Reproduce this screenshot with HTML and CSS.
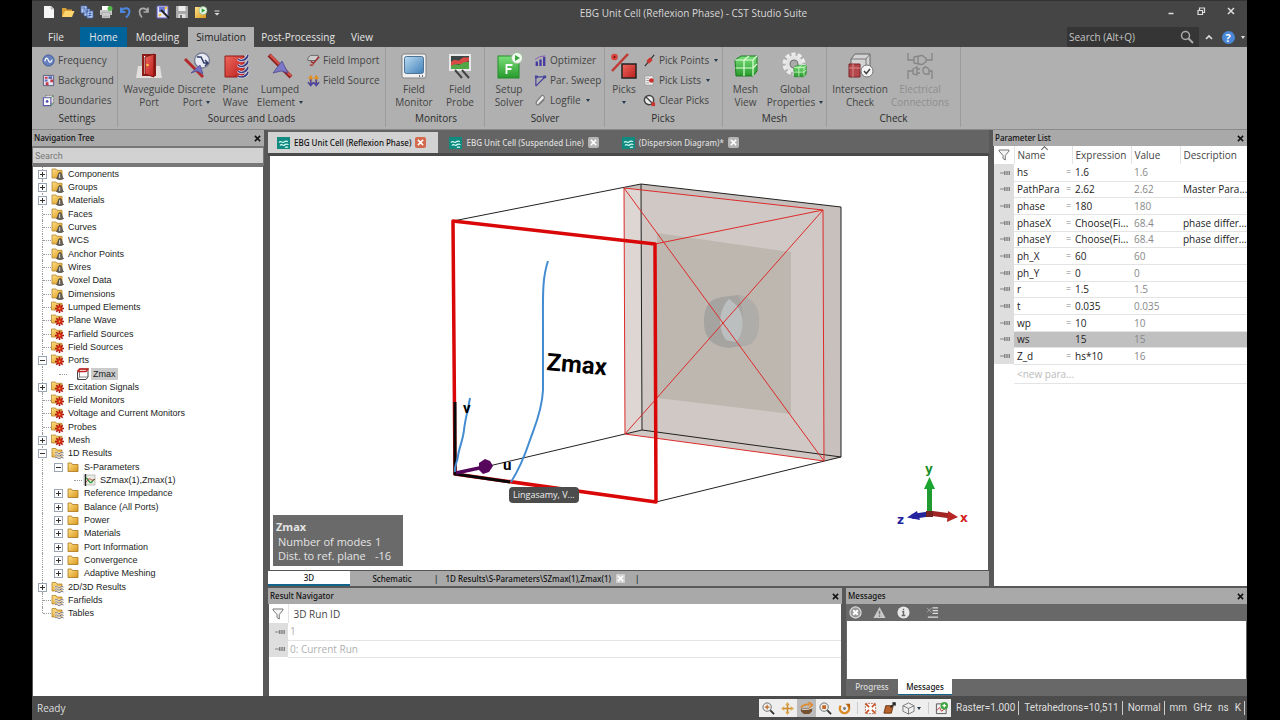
FILE: index.html
```html
<!DOCTYPE html>
<html lang="en">
<head>
<meta charset="utf-8">
<title>EBG Unit Cell (Reflexion Phase) - CST Studio Suite</title>
<link rel="stylesheet" href="styles.css">
</head>
<body>
<svg class="defs" aria-hidden="true">
  <defs>
    <linearGradient id="gold" x1="0" y1="0" x2="1" y2="1"><stop offset="0" stop-color="#ffe28a"/><stop offset="1" stop-color="#d9961a"/></linearGradient>
    <linearGradient id="red" x1="0" y1="0" x2="1" y2="1"><stop offset="0" stop-color="#f0685c"/><stop offset="1" stop-color="#b81d1d"/></linearGradient>
    <linearGradient id="green" x1="0" y1="0" x2="0" y2="1"><stop offset="0" stop-color="#7be07a"/><stop offset="1" stop-color="#279a2d"/></linearGradient>
    <linearGradient id="blue" x1="0" y1="0" x2="1" y2="1"><stop offset="0" stop-color="#bcdcf2"/><stop offset="1" stop-color="#3f7fb8"/></linearGradient>
    <symbol id="folder" viewBox="0 0 13 12"><path d="M1 10.500V2h3.500l1 1.500H11v7z" fill="url(#gold)" stroke="#a8761a" stroke-width=".8"/></symbol>
    <symbol id="f-model" viewBox="0 0 13 12"><path d="M1 10V1h4l1 1.300h5V10z" fill="url(#gold)" stroke="#b58428" stroke-width=".8"/><path d="M5.500 10.500C7 10 7 4.500 9 4.500s2 5.500 3.500 6c-1.500 1.300-5.500 1.300-7 0z" fill="#6d6a63" stroke="#39362f" stroke-width=".7"/><path d="M8.600 6v4" stroke="#d8d4ca"/></symbol>
    <symbol id="f-gear" viewBox="0 0 13 12"><path d="M.5 9V1h4l1 1.300H11V9z" fill="url(#gold)" stroke="#b58428" stroke-width=".8"/><path d="M8.500 3v9M4 7.500h9M5.300 4.300l6.400 6.400M11.700 4.300l-6.400 6.400" stroke="#a81410" stroke-width="1.600"/><circle cx="8.500" cy="7.500" r="2.800" fill="#cf2a18"/><circle cx="8.500" cy="7.500" r="1" fill="#f2a03c"/></symbol>
    <symbol id="f-wave" viewBox="0 0 13 12"><path d="M1 10V1.500h4L6 3h5v7z" fill="url(#gold)" stroke="#b58428" stroke-width=".8"/><path d="M4 6c2-2 3 1.500 5 .3s2-1 3.500-.3M4 8.500c2-2 3 1.500 5 .3s2-1 3.500-.3M4 11c2-2 3 1.500 5 .3s2-1 3.500-.3" fill="none" stroke="#fff" stroke-width="1.800"/><path d="M4 6c2-2 3 1.500 5 .3s2-1 3.500-.3M4 8.500c2-2 3 1.500 5 .3s2-1 3.500-.3M4 11c2-2 3 1.500 5 .3s2-1 3.500-.3" fill="none" stroke="#5a5560" stroke-width=".9"/></symbol>
    <symbol id="f-port" viewBox="0 0 13 12"><path d="M1.500 3.500 3.500 1h8.500v8l-2 2.500H1.500z" fill="#fff" stroke="#444"/><path d="M3.500 1v8M1.500 11.500l2-2.500H12" stroke="#666" fill="none" stroke-width=".8"/><path d="M1.500 3.500h8.500M10 3.500 12 1H3.500L1.500 3.500" stroke="#c52222" fill="none" stroke-width="1.300"/></symbol>
    <symbol id="f-plot" viewBox="0 0 13 12"><rect x="1" y="1" width="11" height="10" fill="#e8ece2" stroke="#999" stroke-width=".6"/><path d="M2.500 0v12" stroke="#222" stroke-width="1.300"/><path d="M3 4c2 0 3 5 5 4.500s2-4 4-3" fill="none" stroke="#2c9a3a" stroke-width="1.300"/><path d="M3 8c2-1 2-4 4-3s3 2 5 0" fill="none" stroke="#c13c3c"/></symbol>
    <symbol id="funnel" viewBox="0 0 12 12"><path d="M1 1h10v1L7.300 6.500V11l-2.300-1.500v-3L1 2z" fill="#f4f4f4" stroke="#777"/></symbol>
    <symbol id="pin" viewBox="0 0 10 6"><path d="M0 3h4M4.500 1v4M5 2h5M5 4h5M7 1v4M9.500 1v4" stroke="#858585" stroke-width="1" fill="none"/></symbol>
    <symbol id="doc" viewBox="0 0 13 12"><path d="M0 0h13v12H0z" fill="#118a80"/><path d="M2 5.500c2-2.500 3 1 5-.5s2-1 4-.5M3 8.500c2-2.500 3 1 4.500-.5s2-1 4-.5M8 10.500c1-1 2 0 3-.5" fill="none" stroke="#d8fff8" stroke-width="1.200"/></symbol>
    <symbol id="x" viewBox="0 0 8 8"><path d="M1 1l6 6M7 1 1 7" stroke="currentColor" stroke-width="1.700"/></symbol>
    <symbol id="meshcube" viewBox="0 0 28 28"><path d="M3 8 9 4h16v15l-4 5H4z" fill="url(#green)" stroke="#187a20"/><path d="M3 8h18l4-4M21 8v16M12 8v16M3.500 16H21l4-4M12 8l5-4" stroke="#e0ffd8" fill="none" stroke-width="1.200"/></symbol>
  </defs>
</svg>
<div class="app">
<header class="titlebar">
  <div class="quick">
    <button aria-label="New"><svg viewBox="0 0 14 14"><path d="M2 1h7l3 3v9H2z" fill="#f6f6f6"/><path d="M9 1v3h3" fill="#ccc" stroke="#aaa" stroke-width=".6"/></svg></button>
    <button aria-label="Open"><svg viewBox="0 0 14 14"><path d="M1 12V3h4l1 1.500h5V7" fill="#d9a037"/><path d="M1 12 4 6h9.500L11 12z" fill="#ffd56e"/></svg></button>
    <button aria-label="Copy"><svg viewBox="0 0 14 14"><path d="M1 1h6v7H1zM4 4h6v7H4zM7 6h6v7H7z" fill="#bccdf0" stroke="#4464aa" stroke-width=".8"/><path d="M2 3h3M5 6h3M8.500 8.500h3M8.500 10.500h3" stroke="#3c5fae"/></svg></button>
    <button aria-label="Print"><svg viewBox="0 0 14 14"><path d="M3 1h7v4H3z" fill="#fff"/><path d="M1 5h12v5H1z" fill="#c7c7c7"/><path d="M3 8h8v5H3z" fill="#f4f4f4" stroke="#777" stroke-width=".6"/><path d="M4 10h6M4 11.700h6" stroke="#777" stroke-width=".7"/><circle cx="11" cy="3.500" r="2.500" fill="#53b74c"/></svg></button>
    <button aria-label="Undo"><svg viewBox="0 0 14 14"><path d="M3 2.500v4.500h4.500M3 6.500C5 2.500 11 2 11.500 6.500c0 3-2 4.500-3.500 6" fill="none" stroke="#4d86d8" stroke-width="2"/></svg></button>
    <button aria-label="Redo"><svg viewBox="0 0 14 14"><path d="M11 2.500v4.500H6.500M11 6.500C9 2.500 3 2 2.500 6.500c0 3 1 4.500 2.500 6" fill="none" stroke="#aaa" stroke-width="1.700"/></svg></button>
    <button aria-label="Save and update"><svg viewBox="0 0 14 14"><path d="M1 1h11v12H1z" fill="#e7e7fb" stroke="#6060b8"/><path d="M3 2h6v5H3z" fill="#6b78cf"/><path d="M5 5l8 8" stroke="#222" stroke-width="2"/><path d="M9 4l2-2M3 11l2-2" stroke="#f2c13c" stroke-width="2"/></svg></button>
    <button aria-label="Save"><svg viewBox="0 0 14 14"><path d="M1 1h12v12H1z" fill="#a9a9a9"/><path d="M3.500 1h7v5h-7z" fill="#eee"/><path d="M3.500 9h7v4h-7z" fill="#ddd"/><path d="M5 10h2v3H5z" fill="#666"/></svg></button>
    <button aria-label="Run macro"><svg viewBox="0 0 14 14"><path d="M1 2h5l1 1.500h5V13H1z" fill="url(#gold)"/><circle cx="9" cy="5.500" r="4" fill="#eaf7e6" stroke="#8bb487" stroke-width=".7"/><path d="M7.700 3.300v4.400l3.500-2.200z" fill="#31a238"/></svg></button>
    <button class="narrow" aria-label="Customize"><svg viewBox="0 0 8 14"><path d="M1.500 6h5" stroke="#ddd"/><path d="M1.500 8h5L4 10.500z" fill="#ddd"/></svg></button>
  </div>
  <h1>EBG Unit Cell (Reflexion Phase) - CST Studio Suite</h1>
  <div class="winbtns">
    <button aria-label="Minimize"><svg viewBox="0 0 10 10"><path d="M2.500 7.500h5" stroke="#ddd" stroke-width="1.500"/></svg></button>
    <button aria-label="Restore"><svg viewBox="0 0 10 10"><path d="M2 4.500h4.500V8.500H2zM3.500 4V2h5v4.500H7" fill="none" stroke="#ddd" stroke-width="1.200"/></svg></button>
    <button aria-label="Close"><svg viewBox="0 0 10 10"><path d="M2 2l6 6M8 2 2 8" stroke="#ddd" stroke-width="1.500"/></svg></button>
  </div>
</header>
<nav class="menubar">
  <button class="m-file">File</button><button class="m-home">Home</button><button class="m-mod">Modeling</button><button class="m-sim">Simulation</button><button class="m-post">Post-Processing</button><button class="m-view">View</button>
  <span class="grow"></span>
  <label class="cmd"><input type="search" placeholder="Search (Alt+Q)" aria-label="Search commands"><svg viewBox="0 0 14 14"><circle cx="5.500" cy="5.500" r="4" fill="none" stroke="#aaa" stroke-width="1.500"/><path d="M8.500 8.500 13 13" stroke="#aaa" stroke-width="2"/></svg></label>
  <button class="help" aria-label="Collapse ribbon"><svg viewBox="0 0 10 10"><path d="M2 7l3-3 3 3" fill="none" stroke="#ddd" stroke-width="1.700"/></svg></button>
  <button class="helpq" aria-label="Help"><span>?</span><i class="dn light"></i></button>
</nav>
<section class="ribbon">
  <div class="group g-set"><div class="tools"><div class="small">
    <button><svg viewBox="0 0 14 14"><circle cx="7" cy="7" r="6" fill="#6680bd" stroke="#3f5897"/><path d="M3 8c1-5 3-4 4-1s3 2 4-1" fill="none" stroke="#fff" stroke-width="1.300"/></svg>Frequency</button>
    <button><svg viewBox="0 0 14 14"><path d="M1.500 1.500h11v11h-11z" fill="#e8e4f4" stroke="#555a7c"/><path d="M3 3h3v2H3zM9 6h3v3H9zM4 9h3v3H4z" fill="#c93b42"/><path d="M7 2.500h4v3H7zM3 6h3v2H3z" fill="#5a6dbb"/></svg>Background</button>
    <button><svg viewBox="0 0 14 14"><path d="M4 1.500h8.500V10H4z" fill="#ddd" stroke="#8a7a7a" stroke-dasharray="2 1"/><path d="M1.500 4h8v8.500h-8z" fill="#fff" stroke="#5b5ba8" stroke-width="1.200"/><path d="M9.500 4l3-2.500M9.500 12.500l3-2.500" stroke="#3d9a55"/><path d="M4 8h3M5.500 6.500v3" stroke="#4646ac" stroke-width="1.500"/></svg>Boundaries</button>
  </div></div><h2>Settings</h2></div>

  <div class="group g-src"><div class="tools">
    <button class="big w56"><svg viewBox="0 0 28 28"><path d="M3 14h22l2 12H1z" fill="#e1dedc"/><path d="M7 2h14v22H7z" fill="#8c1b17"/><path d="M9 4h8v18H9z" fill="#fff"/><path d="M10 5l9-3v23l-9-3z" fill="url(#red)" stroke="#79120f"/><circle cx="12.500" cy="13" r="1.300" fill="#ffc34b"/></svg><span>Waveguide<br>Port</span></button>
    <button class="big w38"><svg viewBox="0 0 28 28"><circle cx="19" cy="8.500" r="7.500" fill="#e9ecf5" stroke="#7c8196" stroke-width="1.500"/><path d="M14 5h4l3 6h4M22 8l3 3-3 3" fill="none" stroke="#333c66" stroke-width="1.500"/><path d="M2 7 20 25" stroke="#b52b2b" stroke-width="3"/><path d="M8 21l9-8 3 9-6-3z" fill="#7471c4" stroke="#4c488e" stroke-width=".7"/></svg><span>Discrete<br>Port<i class="dn"></i></span></button>
    <button class="big w38"><svg viewBox="0 0 28 28"><path d="M3 4h19v21H3z" fill="url(#red)" stroke="#8e1a18"/><path d="M26 3c-1 5-7 7-10 4M26 9c-1 5-7 7-10 4M26 15c-1 5-7 7-10 4M26 20c-1 5-7 6-10 4" fill="none" stroke="#e4e4f4" stroke-width="3"/><path d="M26 3c-1 5-7 7-10 4M26 9c-1 5-7 7-10 4M26 15c-1 5-7 7-10 4M26 20c-1 5-7 6-10 4" fill="none" stroke="#393c80" stroke-width="1.600"/></svg><span>Plane<br>Wave</span></button>
    <button class="big w50"><svg viewBox="0 0 28 28"><path d="M3 3l22 22" stroke="#8e2020" stroke-width="4"/><path d="M4 3l21 21" stroke="#d9534d" stroke-width="2"/><path d="M7 21 16 9l6 12-7-2z" fill="#7b78c8" stroke="#4c488e" stroke-width=".8"/></svg><span>Lumped<br>Element<i class="dn"></i></span></button>
    <div class="small">
      <button><svg viewBox="0 0 14 14"><path d="M1 4 4 1.500h8v3L9 7H1z" fill="#ccc" stroke="#666"/><path d="M13 3 7 10 4 8" fill="none" stroke="#a03030" stroke-width="1.700"/><path d="M3 11h5l-2 2H3z" fill="#b14b4b"/></svg>Field Import</button>
      <button><svg viewBox="0 0 14 14"><path d="M4 12V2M10 12V2" stroke="#cf7c18" stroke-width="2"/><path d="M1 5 4 1l3 4zM7 5l3-4 3 4z" fill="#e39021"/><path d="M4 6v6M10 6v6M1 9l3 3.500L7 9M7 9l3 3.500L13 9" fill="none" stroke="#4b459f" stroke-width="1.600"/></svg>Field Source</button>
    </div>
  </div><h2>Sources and Loads</h2></div>

  <div class="group g-mon"><div class="tools">
    <button class="big w46"><svg viewBox="0 0 28 28"><rect x="2" y="2" width="24" height="24" rx="2" fill="#f0f0f0" stroke="#858585"/><rect x="4.500" y="4.500" width="19" height="17" rx="2" fill="url(#blue)" stroke="#4c7396"/><path d="M19 24h1M22 24h1" stroke="#444" stroke-width="1.500"/></svg><span>Field<br>Monitor</span></button>
    <button class="big w46"><svg viewBox="0 0 28 28"><rect x="4" y="3" width="20" height="15" fill="#3c4544" stroke="#e8e8e8" stroke-width="2"/><path d="M5 10c5-5 6 1 10-3s5 0 8-2v4c-5 1-4 3-9 3s-5 1-9 2z" fill="#d74a46"/><path d="M5 14c5-3 7 0 10-2s5-2 8-2v7H5z" fill="#52a746"/><path d="M9 18l7 8M16 18l7 8" stroke="#444" stroke-width="2"/></svg><span>Field<br>Probe</span></button>
  </div><h2>Monitors</h2></div>

  <div class="group g-sol"><div class="tools">
    <button class="big w40"><svg viewBox="0 0 28 28"><rect x="3" y="4" width="21" height="22" fill="url(#green)" stroke="#238b2b"/><path d="M11.500 22v-9h6M11.500 17h5" fill="none" stroke="#fff" stroke-width="1.800"/><circle cx="22" cy="6" r="5.500" fill="#f2fbf0" stroke="#9bbd98"/><path d="M20 3v6l5-3z" fill="#38a53e"/></svg><span>Setup<br>Solver</span></button>
    <div class="small">
      <button><svg viewBox="0 0 14 14"><path d="M3 13V8M7 13V6M11 13V3" stroke="#4639a0" stroke-width="2.500"/><path d="M1 6l5-3 6-1" stroke="#8e58b4" fill="none"/></svg>Optimizer</button>
      <button><svg viewBox="0 0 14 14"><path d="M2 13V3h10L2 13" fill="none" stroke="#47429a" stroke-width="1.300"/><path d="M1 1.500h3v3H1zM10 1.500h3v3h-3z" fill="#47429a"/></svg>Par. Sweep</button>
      <button><svg viewBox="0 0 14 14"><path d="M4 12 11 5c1-3-2-4-3-3L3 8c-2 3 1 5 3 3l5-5" fill="#eee" stroke="#777" stroke-width="1.200"/></svg>Logfile<i class="dn"></i></button>
    </div>
  </div><h2>Solver</h2></div>

  <div class="group g-pick"><div class="tools">
    <button class="big w34"><svg viewBox="0 0 28 28"><path d="M2 19 18 2" stroke="#c23a34" stroke-width="2.500"/><circle cx="4.500" cy="5" r="3.300" fill="#d9423c"/><circle cx="4.500" cy="5" r="1" fill="#611"/><rect x="12" y="12" width="14" height="14" fill="url(#red)" stroke="#222" stroke-width="1.500"/></svg><span>Picks<br><i class="dn solo"></i></span></button>
    <div class="small">
      <button><svg viewBox="0 0 14 14"><path d="M2 13 12 1" stroke="#333" stroke-width="1.300"/><path d="M5 9l4-4" stroke="#cf342e" stroke-width="4"/></svg>Pick Points<i class="dn"></i></button>
      <button><svg viewBox="0 0 14 14"><path d="M2 2h9v10H2z" fill="#f1efef" stroke="#999"/><path d="M3.500 4.500h3M3.500 7h3M3.500 9.500h3" stroke="#999"/><circle cx="9" cy="7" r="2.500" fill="#c9302d"/></svg>Pick Lists<i class="dn"></i></button>
      <button><svg viewBox="0 0 14 14"><circle cx="6.500" cy="6.500" r="5" fill="#eee" stroke="#444" stroke-width="1.600"/><path d="M3 3l7 7" stroke="#444" stroke-width="1.500"/><path d="M9 9h4v4H9z" fill="#c33"/></svg>Clear Picks</button>
    </div>
  </div><h2>Picks</h2></div>

  <div class="group g-mesh"><div class="tools">
    <button class="big w38"><svg viewBox="0 0 28 28"><use href="#meshcube"/></svg><span>Mesh<br>View</span></button>
    <button class="big w60"><svg viewBox="0 0 28 28"><circle cx="13" cy="12" r="9.500" fill="none" stroke="#ececec" stroke-width="4" stroke-dasharray="4 2"/><circle cx="13" cy="12" r="6.500" fill="none" stroke="#e4e4e4" stroke-width="4"/><circle cx="13" cy="12" r="4" fill="#aaa" stroke="#777"/><use href="#meshcube" x="11" y="11" width="16" height="16"/></svg><span>Global<br>Properties<i class="dn"></i></span></button>
  </div><h2>Mesh</h2></div>

  <div class="group g-chk"><div class="tools">
    <button class="big w60"><svg viewBox="0 0 28 28"><path d="M5 7 9 2h15v13l-4 5H5z" fill="#d3d3d3" stroke="#666"/><path d="M5 7h15v13M20 7l4-5" fill="none" stroke="#777"/><path d="M3 12h11v13H3z" fill="#b4474b" stroke="#7d2328"/><path d="M3 16h11M7 12v13" stroke="#d98a8a"/><circle cx="21" cy="19" r="6" fill="#f4f4f4" stroke="#777"/><path d="M18 19l2.300 2.500L24 17" fill="none" stroke="#444" stroke-width="1.500"/></svg><span>Intersection<br>Check</span></button>
    <button class="big w60 off" disabled><svg viewBox="0 0 28 28"><path d="M2 1v7h6M26 1v7h-6M8 5l4-1v8l-4-1zM12 5c2-2 5-2 6 0l2 1v4l-2 1c-1 2-4 2-6 0M2 27v-8h5M26 27v-8h-3M7 17l4-2v8l-4-1zM11 17h3M11 21h3M23 22h-3c-4 0-4-7 0-7l3 2z" fill="none" stroke="#858585" stroke-width="1.300"/></svg><span>Electrical<br>Connections</span></button>
  </div><h2>Check</h2></div>
</section>

<main class="workspace">
  <aside class="panel nav">
    <div class="head"><h3>Navigation Tree</h3><button aria-label="Close navigation tree"><svg><use href="#x"/></svg></button></div>
    <div class="find"><input type="search" placeholder="Search" aria-label="Search tree"></div>
    <div class="treebox"><ul class="tree">
      <li class="plus"><svg><use href="#f-model"/></svg><span>Components</span></li>
      <li class="plus"><svg><use href="#f-model"/></svg><span>Groups</span></li>
      <li class="plus"><svg><use href="#f-model"/></svg><span>Materials</span></li>
      <li><svg><use href="#f-model"/></svg><span>Faces</span></li>
      <li><svg><use href="#f-model"/></svg><span>Curves</span></li>
      <li><svg><use href="#f-model"/></svg><span>WCS</span></li>
      <li><svg><use href="#f-model"/></svg><span>Anchor Points</span></li>
      <li><svg><use href="#f-model"/></svg><span>Wires</span></li>
      <li><svg><use href="#f-model"/></svg><span>Voxel Data</span></li>
      <li><svg><use href="#f-model"/></svg><span>Dimensions</span></li>
      <li><svg><use href="#f-gear"/></svg><span>Lumped Elements</span></li>
      <li><svg><use href="#f-gear"/></svg><span>Plane Wave</span></li>
      <li><svg><use href="#f-gear"/></svg><span>Farfield Sources</span></li>
      <li><svg><use href="#f-gear"/></svg><span>Field Sources</span></li>
      <li class="plus minus"><svg><use href="#f-gear"/></svg><span>Ports</span></li>
      <li class="l2 leaf"><svg><use href="#f-port"/></svg><span class="picked">Zmax</span></li>
      <li class="plus"><svg><use href="#f-gear"/></svg><span>Excitation Signals</span></li>
      <li><svg><use href="#f-gear"/></svg><span>Field Monitors</span></li>
      <li><svg><use href="#f-gear"/></svg><span>Voltage and Current Monitors</span></li>
      <li><svg><use href="#f-gear"/></svg><span>Probes</span></li>
      <li class="plus"><svg><use href="#f-gear"/></svg><span>Mesh</span></li>
      <li class="plus minus"><svg><use href="#f-wave"/></svg><span>1D Results</span></li>
      <li class="l2 plus minus"><svg><use href="#folder"/></svg><span>S-Parameters</span></li>
      <li class="l3"><svg><use href="#f-plot"/></svg><span>SZmax(1),Zmax(1)</span></li>
      <li class="l2 plus"><svg><use href="#folder"/></svg><span>Reference Impedance</span></li>
      <li class="l2 plus"><svg><use href="#folder"/></svg><span>Balance (All Ports)</span></li>
      <li class="l2 plus"><svg><use href="#folder"/></svg><span>Power</span></li>
      <li class="l2 plus"><svg><use href="#folder"/></svg><span>Materials</span></li>
      <li class="l2 plus"><svg><use href="#folder"/></svg><span>Port Information</span></li>
      <li class="l2 plus"><svg><use href="#folder"/></svg><span>Convergence</span></li>
      <li class="l2 plus"><svg><use href="#folder"/></svg><span>Adaptive Meshing</span></li>
      <li class="plus"><svg><use href="#f-wave"/></svg><span>2D/3D Results</span></li>
      <li><svg><use href="#f-wave"/></svg><span>Farfields</span></li>
      <li class="end"><svg><use href="#f-wave"/></svg><span>Tables</span></li>
    </ul></div>
  </aside>

  <div class="right">
    <div class="upper">
      <section class="view">
        <div class="doctabs">
          <div class="doctab on"><svg><use href="#doc"/></svg><span>EBG Unit Cell (Reflexion Phase)</span><button aria-label="Close tab"><svg><use href="#x"/></svg></button></div>
          <div class="doctab"><svg><use href="#doc"/></svg><span>EBG Unit Cell (Suspended Line)</span><button aria-label="Close tab"><svg><use href="#x"/></svg></button></div>
          <div class="doctab"><svg><use href="#doc"/></svg><span>(Dispersion Diagram)*</span><button aria-label="Close tab"><svg><use href="#x"/></svg></button></div>
        </div>
        <div class="canvas">
          <svg class="scene" viewBox="270 156 718 414" role="img" aria-label="Unit cell model">
            <path d="M624 188 641 184 841 207V457L824 461 625 434z" fill="#d0c8c4"/>
            <path d="M624 188 641 184 642 430 625 434z" fill="#ddd6d2"/>
            <path d="M823 210 841 207V457L824 461z" fill="#c8c0bc"/>
            <path d="M641 184 841 207 823 210 624 188z" fill="#c5bebb"/>
            <path d="M657 233 791 252V414L657 398z" fill="#beb7b0"/>
            <path d="M704 322C704 304 711 299 722 297L738 295C751 297 759 306 759 320 759 338 753 345 743 346L728 348C712 346 704 338 704 322z" fill="#a6a4a1"/>
            <path d="M738 295C751 297 759 306 759 320 759 338 753 345 743 346L735 342C744 330 745 309 738 295z" fill="#afadaa"/>
            <path d="M729 299c-10 10-12 28-3 41l10 2c9-9 9-30-1-38z" fill="#bcbfbf"/>
            <path d="M453 221 641 184 841 207V457L656 502M641 184 642 430 841 457M455 474 642 430" fill="none" stroke="#222" stroke-width="1"/>
            <path d="M624 188 823 210 824 461 625 434zM624 188 824 461M823 210 625 434M655 244 823 210" fill="none" stroke="#dd2b2b" stroke-width="1"/>
            <path d="M453 221 655 244 656 502 455 474z" fill="none" stroke="#d90707" stroke-width="3.500" stroke-linejoin="round"/>
            <path d="M455 402V474L510 482" fill="none" stroke="#080808" stroke-width="3"/>
            <path d="M456 473 484 467" stroke="#56075c" stroke-width="3.500"/>
            <path d="M479 463l6-4 5 2 3 5-4 6-6 2-4-4z" fill="#56075c"/>
            <path d="M548 261c-6 18-5 35-5 69v60c-1 22-9 38-13 50s-10 28-19 42M470 398c-2 12-5 22-6 32s-5 18-6 26-4 10-3 16" fill="none" stroke="#438cd2" stroke-width="2"/>
            <text class="zlabel" x="546" y="370" transform="rotate(5 546 370)">Zmax</text>
            <text class="axis" x="463" y="413">v</text><text class="axis" x="503" y="470">u</text>
            <path d="M929 514 912 516.500" stroke="#25259a" stroke-width="5"/><path d="M907 517.500 917 511l3 9z" fill="#2424a0"/>
            <path d="M929 513 951 516" stroke="#a02424" stroke-width="5"/><path d="M958 517l-10-6-1 11z" fill="#b72525"/>
            <path d="M929.500 514V486" stroke="#209b31" stroke-width="5"/><path d="M929.500 477l-5.500 12h11z" fill="#1ca52e"/>
            <path d="M926 511h7v6h-7z" fill="#772222"/>
            <text class="tri ty" x="925" y="473">y</text><text class="tri tx" x="960" y="522">x</text><text class="tri tz" x="897" y="524">z</text>
          </svg>
          <div class="who">Lingasamy, V...</div>
          <dl class="info"><dt class="t">Zmax</dt><dt>Number of modes</dt><dd>1</dd><dt>Dist. to ref. plane</dt><dd>-16</dd></dl>
        </div>
        <div class="viewtabs"><button class="on">3D</button><button>Schematic</button><i>|</i><button class="res">1D Results\S-Parameters\SZmax(1),Zmax(1)</button><button class="xx" aria-label="Close result"><svg><use href="#x"/></svg></button><i>|</i></div>
      </section>
      <section class="panel params">
        <div class="head"><h3>Parameter List</h3><button aria-label="Close parameter list"><svg><use href="#x"/></svg></button></div>
        <div class="body"><table>
          <colgroup><col class="c0"><col class="c1"><col class="c2"><col class="c3"><col class="c4"><col></colgroup>
          <thead><tr><th class="fil"><svg><use href="#funnel"/></svg></th><th colspan="2" class="sorted">Name</th><th>Expression</th><th>Value</th><th>Description</th></tr></thead>
          <tbody>
          <tr><td><svg><use href="#pin"/></svg></td><td>hs</td><td>=</td><td>1.6</td><td>1.6</td><td></td></tr>
          <tr><td><svg><use href="#pin"/></svg></td><td>PathPara</td><td>=</td><td>2.62</td><td>2.62</td><td>Master Para...</td></tr>
          <tr><td><svg><use href="#pin"/></svg></td><td>phase</td><td>=</td><td>180</td><td>180</td><td></td></tr>
          <tr><td><svg><use href="#pin"/></svg></td><td>phaseX</td><td>=</td><td>Choose(Fi...</td><td>68.4</td><td>phase differ...</td></tr>
          <tr><td><svg><use href="#pin"/></svg></td><td>phaseY</td><td>=</td><td>Choose(Fi...</td><td>68.4</td><td>phase differ...</td></tr>
          <tr><td><svg><use href="#pin"/></svg></td><td>ph_X</td><td>=</td><td>60</td><td>60</td><td></td></tr>
          <tr><td><svg><use href="#pin"/></svg></td><td>ph_Y</td><td>=</td><td>0</td><td>0</td><td></td></tr>
          <tr><td><svg><use href="#pin"/></svg></td><td>r</td><td>=</td><td>1.5</td><td>1.5</td><td></td></tr>
          <tr><td><svg><use href="#pin"/></svg></td><td>t</td><td>=</td><td>0.035</td><td>0.035</td><td></td></tr>
          <tr><td><svg><use href="#pin"/></svg></td><td>wp</td><td>=</td><td>10</td><td>10</td><td></td></tr>
          <tr class="sel"><td><svg><use href="#pin"/></svg></td><td>ws</td><td></td><td>15</td><td>15</td><td></td></tr>
          <tr><td><svg><use href="#pin"/></svg></td><td>Z_d</td><td>=</td><td>hs*10</td><td>16</td><td></td></tr>
          <tr class="new"><td></td><td colspan="5">&lt;new para...</td></tr>
          </tbody></table></div>
      </section>
    </div>
    <div class="lower">
      <section class="panel results">
        <div class="head"><h3>Result Navigator</h3><button aria-label="Close result navigator"><svg><use href="#x"/></svg></button></div>
        <div class="body"><table>
          <colgroup><col class="c0"><col></colgroup>
          <thead><tr><th class="fil"><svg><use href="#funnel"/></svg></th><th>3D Run ID</th></tr></thead>
          <tbody><tr><td><svg><use href="#pin"/></svg></td><td>1</td></tr><tr><td><svg><use href="#pin"/></svg></td><td>0: Current Run</td></tr></tbody>
        </table></div>
      </section>
      <section class="panel msgs">
        <div class="head"><h3>Messages</h3><button aria-label="Close messages"><svg><use href="#x"/></svg></button></div>
        <div class="msgbar">
          <button aria-label="Errors"><svg viewBox="0 0 14 14"><circle cx="7" cy="7" r="6" fill="#999" stroke="#ddd" stroke-width="1.300"/><path d="M4.500 4.500l5 5M9.500 4.500l-5 5" stroke="#fff" stroke-width="2.200"/></svg></button>
          <button aria-label="Warnings"><svg viewBox="0 0 14 14"><path d="M7 1 13.500 13H.5z" fill="#c9c9c9"/><path d="M7 5v4M7 10v1.700" stroke="#777" stroke-width="1.600"/></svg></button>
          <button aria-label="Information"><svg viewBox="0 0 14 14"><circle cx="7" cy="7" r="6.500" fill="#e9e9e9"/><path d="M6 13h5l-2-3z" fill="#e9e9e9"/><path d="M5.500 6H7v4M5 10.300h4M7 3v1.700" fill="none" stroke="#666" stroke-width="1.500"/></svg></button>
          <button class="clr" aria-label="Clear messages"><svg viewBox="0 0 14 14"><path d="M1 2l5 5M6 2 1 7" stroke="#aaa"/><path d="M7 2h6M7 5h6M7 8h6M2 12h11" stroke="#ddd" stroke-width="1.400"/></svg></button>
        </div>
        <div class="msgbody"></div>
        <div class="msgtabs"><button>Progress</button><button class="on">Messages</button></div>
      </section>
    </div>
  </div>
</main>

<footer class="status">
  <span>Ready</span><span class="grow"></span>
  <div class="vtools">
    <button aria-label="Zoom"><svg viewBox="0 0 14 14"><circle cx="5.500" cy="5.500" r="4.500" fill="#f1f1f1" stroke="#666"/><path d="M9 9l4 4" stroke="#333" stroke-width="2"/><path d="M5.500 3v5M3 5.500h5" stroke="#b5651d" stroke-width="1.200"/></svg></button>
    <button aria-label="Pan"><svg viewBox="0 0 14 14"><path d="M7 2v10M2 7h10" stroke="#c98a2b" stroke-width="1.700"/><path d="M7 0l2.500 3.500h-5zM7 14l2.500-3.500h-5zM0 7l3.500-2.500v5zM14 7l-3.500-2.500v5z" fill="#dba54b"/></svg></button>
    <button class="act" aria-label="Rotate"><svg viewBox="0 0 14 14"><path d="M1 7h12v3l-3 3H4l-3-3z" fill="#77512f"/><path d="M1 6c2-3 6-4 9-3M9 0l4 3-3 4" fill="none" stroke="#e08a2d" stroke-width="2"/><path d="M2 8h7l4-2" stroke="#ddd" fill="none"/></svg></button>
    <button aria-label="Dynamic zoom"><svg viewBox="0 0 14 14"><circle cx="5.500" cy="5.500" r="4.500" fill="#f1f1f1" stroke="#666"/><path d="M9 9l4 4" stroke="#333" stroke-width="2"/><path d="M3.500 3.500h4v4h-4z" fill="#c5651d"/></svg></button>
    <button aria-label="Rotate in plane"><svg viewBox="0 0 14 14"><path d="M3 4a5 5 0 1 0 8 0" fill="none" stroke="#dc8924" stroke-width="2.500"/><path d="M8 2h5v5z" fill="#b36413"/><circle cx="7" cy="7" r="1.500" fill="#777"/></svg></button>
    <i class="vsep"></i>
    <button aria-label="Fit view"><svg viewBox="0 0 14 14"><path d="M1.500 1.500h11v11h-11z" fill="#fff" stroke="#b06c50" stroke-dasharray="2 1"/><path d="M2 2l3.500 3.500M12 2 8.500 5.500M2 12l3.500-3.500M12 12 8.500 8.500" stroke="#c84f22" stroke-width="1.700"/></svg></button>
    <button aria-label="Working plane"><svg viewBox="0 0 14 14"><path d="M3 4h8l-2 8H1z" fill="#b8622d" stroke="#673613"/><path d="M8 6l5-5M10 1h3v3" stroke="#222" stroke-width="1.500" fill="none"/></svg></button>
    <button class="wide" aria-label="View mode"><svg viewBox="0 0 14 14"><path d="M1 4 7 1l6 3v6l-6 3-6-3zM1 4l6 3 6-3M7 7v6" fill="#eee" stroke="#777"/></svg><i class="dn"></i></button>
    <i class="vsep"></i>
    <button aria-label="Add plot"><svg viewBox="0 0 14 14"><path d="M1.500 2v10.500H12V2z" fill="#eee" stroke="#555"/><path d="M2 9l3-3 2 4 4-3" fill="none" stroke="#bd3b39"/><circle cx="10" cy="4" r="4" fill="#3da53e"/><path d="M10 2v4M8 4h4" stroke="#fff" stroke-width="1.300"/></svg></button>
  </div>
  <span class="cell">Raster=1.000</span><span class="cell">Tetrahedrons=10,511</span><span class="cell">Normal</span><span class="cell"><b>mm</b><b>GHz</b><b>ns</b><b>K</b></span>
</footer>
</div>
</body>
</html>
```
FILE: styles.css
```css
*, *::before, *::after { box-sizing: border-box; }
body { margin: 0; background: #000; font: 10px/13px "Open Sans", "Noto Sans", sans-serif; color: #222; }
button { border: 0; background: none; padding: 0; margin: 0; font: inherit; color: inherit; display: flex; flex: none; align-items: center; justify-content: center; white-space: nowrap; }
input { border: 0; outline: 0; font: inherit; padding: 0; min-width: 0; }
h1, h2, h3, ul, dl, dd { margin: 0; padding: 0; font: inherit; }
svg { display: block; flex: none; }
.defs { position: absolute; width: 0; height: 0; }
.grow { flex: 1; }
.app { margin: 0 33px 0 32px; min-height: 100vh; display: flex; flex-direction: column; background: #545454; }

.dn { display: inline-block; flex: none; border: 2px solid transparent; border-top: 3px solid #263a4c; border-bottom: 0; margin-left: 6px; vertical-align: 2px; }
.dn.light { border-top-color: #ddd; }

.titlebar { height: 27px; display: flex; align-items: center; background: #454545; border-top: 1px solid #333; color: #d8d8d8; padding-bottom: 2px; }
.quick { display: flex; gap: 5px; padding-left: 10px; margin-top: -3px; }
.quick svg { width: 14px; height: 14px; }
.quick .narrow svg { width: 8px; }
.titlebar h1 { flex: 1; text-align: center; }
.winbtns { display: flex; gap: 20px; padding-right: 11px; margin-top: -5px; }
.winbtns svg { width: 10px; height: 10px; }

.menubar { height: 20px; display: flex; background: #454545; color: #e6e6e6; }
.menubar > button { height: 20px; }
.m-file { width: 48px; }
.menubar .m-home { width: 47px; background: #00639a; }
.m-mod { width: 61px; }
.menubar .m-sim { width: 66px; background: #b0b0b0; color: #222; }
.m-post { width: 88px; }
.m-view { width: 40px; }
.cmd { width: 132px; background: #353535; display: flex; align-items: center; padding: 0 5px 0 2px; }
.cmd input { flex: 1; background: none; color: #ddd; }
.cmd input::placeholder { color: #c4c4c4; opacity: 1; }
.cmd svg { width: 14px; height: 14px; }
.help { width: 20px; }
.help svg { width: 10px; height: 10px; }
.helpq { width: 28px; }
.helpq span { width: 13px; height: 13px; border-radius: 50%; background: #4a87d6; color: #fff; font-weight: 700; font-size: 11px; line-height: 13px; }

.ribbon { height: 83px; display: flex; background: #b0b0b0; color: #444; border-bottom: 1px solid #8a8a8a; }
.group { border-right: 1px solid #9b9b9b; padding: 3px 3px 0; display: flex; flex-direction: column; margin-bottom: 2px; }
.tools { display: flex; height: 60px; }
.group h2 { text-align: center; color: #2c2c2c; line-height: 16px; }
.g-set { width: 86px; padding-left: 8px; }
.g-src { width: 268px; }
.g-mon { width: 99px; padding-left: 5px; }
.g-sol { width: 120px; padding-left: 4px; }
.g-pick { width: 118px; padding-left: 2px; }
.g-mesh { width: 104px; }
.g-chk { width: 134px; }
.big { flex-direction: column; justify-content: flex-start; padding-top: 2px; gap: 3px; text-align: center; }
.big svg { width: 28px; height: 28px; }
.big .dn { margin-left: 4px; }
.big .dn.solo { margin-left: 0; }
.big.off { color: #8e8e8e; }
.w34 { width: 34px; } .w38 { width: 39px; } .w40 { width: 40px; } .w46 { width: 46px; } .w50 { width: 50px; } .w56 { width: 56px; } .w60 { width: 60px; }
.small { display: flex; flex-direction: column; align-items: flex-start; margin-left: 2px; }
.g-sol .small { margin-left: 5px; }
.small button { height: 20px; gap: 3px; }
.small svg { width: 13px; height: 13px; }
.small .dn { margin-left: 2px; }

.workspace { flex: 1; display: flex; gap: 4px; background: #585858; }
.right { flex: 1; min-width: 0; display: flex; flex-direction: column; gap: 2px; }
.upper { flex: 1; display: flex; gap: 4px; min-height: 0; }
.lower { height: 108px; display: flex; gap: 4px; }
.panel { display: flex; flex-direction: column; min-width: 0; }
.head { height: 16px; flex: none; display: flex; align-items: center; justify-content: space-between; background: #a9a9a9; padding: 0 3px 0 2px; font: 500 8px/12px "Noto Sans", sans-serif; color: #111; }
.head button { width: 8px; height: 8px; }
.head svg { width: 7px; height: 7px; }
.nav { width: 232px; }
.find { padding: 2px 1px 3px; background: #777; }
.find input { display: block; width: 100%; height: 15px; background: #d2d2d2; padding: 0 2px; font: 9px/12px Roboto, sans-serif; }
.find input::placeholder { color: #777; opacity: 1; }
.treebox { flex: 1; background: #fff; margin: 0 1px; border-top: 1px solid #777; }
.tree { list-style: none; height: 453px; display: grid; grid-auto-rows: 1fr; font: 9px/12px "Liberation Sans", sans-serif; color: #1c1c1c; }
.tree li { display: flex; align-items: center; gap: 4px; padding-left: 18px; position: relative; }
.tree li > svg { width: 13px; height: 12px; }
.tree li::before { content: ""; position: absolute; left: 9px; top: 0; bottom: 0; border-left: 1px dotted #999; }
.tree li.end::before { bottom: 50%; }
.tree li::after { content: ""; position: absolute; left: 10px; width: 8px; top: 50%; border-top: 1px dotted #999; }
.tree li.plus::after { left: 5px; width: 9px; height: 9px; top: calc(50% - 4px); border: 1px solid #9aa4b2; background: linear-gradient(#333, #333) 50% 50% / 5px 1px no-repeat, linear-gradient(#333, #333) 50% 50% / 1px 5px no-repeat, #fff; }
.tree li.minus::after { background: linear-gradient(#333, #333) 50% 50% / 5px 1px no-repeat, #fff; }
.tree li.l2 { padding-left: 34px; }
.tree li.l2::after { left: 26px; }
.tree li.l2.plus::after { left: 21px; }
.tree li.l2.leaf { padding-left: 43px; }
.tree li.l3 { padding-left: 50px; }
.tree li.l3::after { left: 41px; }
.picked { background: #cbcbcb; padding: 0 2px; margin-left: -2px; }

.view { flex: 1; min-width: 0; display: flex; flex-direction: column; background: #585858; }
.doctabs { display: flex; height: 26px; padding-top: 2px; background: #646464; border-bottom: 3px solid #4a4a4a; font: 500 8px/12px "Noto Sans", sans-serif; color: #ddd; }
.doctab { display: flex; align-items: center; gap: 4px; padding: 0 12px 0 11px; }
.doctab.on { background: #d2d2d2; color: #111; padding-left: 9px; }
.doctab > svg { width: 13px; height: 12px; }
.doctab button { width: 11px; height: 11px; border-radius: 2px; background: #b5b5b5; color: #fff; }
.doctab.on button { background: #d2694c; }
.doctab button svg { width: 7px; height: 7px; }
.canvas { flex: 1; min-height: 0; background: #fff; margin: 0 1px 0 2px; position: relative; }
.scene { position: absolute; inset: 0; width: 100%; height: 100%; }
.zlabel { font: 700 24px Roboto, sans-serif; }
.axis { font: 700 15px Roboto, sans-serif; }
.tri { font: 700 12px "DejaVu Sans", sans-serif; }
.ty { fill: #168f26; } .tx { fill: #d42020; } .tz { fill: #2222a0; }
.who { position: absolute; left: 239px; top: 331px; padding: 1px 4px; background: #4c4c4c; color: #eee; border-radius: 4px; font: 9px/14px "Open Sans", sans-serif; }
.info { position: absolute; left: 3px; bottom: 4px; width: 130px; padding: 4px 3px 3px; background: #6a6a6a; color: #e4e4e4; display: grid; grid-template-columns: 99px 1fr; line-height: 14px; font-size: 11px; white-space: nowrap; }
.info dt { padding-left: 2px; }
.info .t { grid-column: 1 / 3; font-weight: 700; line-height: 16px; padding: 0; }
.viewtabs { height: 16px; display: flex; align-items: center; background: #a9a9a9; border-top: 1px solid #555; font: 500 8px/12px "Noto Sans", sans-serif; color: #111; }
.viewtabs button { width: 84px; height: 15px; }
.viewtabs .on { background: #fff; width: 82px; border-bottom: 2px solid #12648a; }
.viewtabs i { font-style: normal; }
.viewtabs .res { width: auto; padding: 0 5px 0 7px; }
.viewtabs .xx { width: 9px; height: 9px; background: #d0d0d0; color: #fff; margin-right: 10px; }
.viewtabs .xx svg { width: 7px; height: 7px; }

.params { width: 254px; }
.body { flex: 1; background: #fff; margin-left: 1px; }
table { border-collapse: collapse; table-layout: fixed; width: 100%; line-height: 14px; }
th, td { padding: 0 0 0 3px; text-align: left; font-weight: 400; height: 17px; white-space: nowrap; overflow: hidden; border-bottom: 1px solid #e4e4e4; }
th { border: 0; border-left: 1px solid #e4e4e4; height: 18px; color: #444; }
.params tbody tr:nth-child(3n+2) td { height: 16px; }
.c0 { width: 20px; } .c1 { width: 52px; } .c2 { width: 6px; } .c3 { width: 59px; } .c4 { width: 49px; }
th.fil { border: 0; padding: 0 0 0 4px; }
th.fil svg { width: 12px; height: 12px; }
tbody tr td:first-child { background: #dedede; padding-left: 6px; border: 0; }
td svg { width: 10px; height: 6px; }
.params td:nth-child(3) { padding: 0; color: #888; font-size: 9px; }
.params td:nth-child(5) { color: #888; }
.sorted { position: relative; }
.sorted::after { content: ""; position: absolute; left: 27px; top: 1px; width: 5px; height: 5px; border: solid #666; border-width: 1px 0 0 1px; transform: rotate(45deg); }
.sel td:not(:first-child) { background: #c0c0c0; }
.params tbody tr.new td { height: 19px; color: #bbb; }
.params tr.new td:first-child { background: #fff; }

.results { flex: 1; }
.results .body { margin-right: 1px; }
.results th { height: 19px; padding-left: 5px; }
.results td { color: #b0b0b0; height: 17px; padding-left: 2px; }
.results .c0 { width: 19px; }
.results th.fil { padding-left: 3px; }
.msgs { width: 401px; background: #686868; }
.msgbar { height: 17px; display: flex; align-items: center; gap: 11px; padding-left: 3px; }
.msgbar svg { width: 13px; height: 13px; }
.msgbar .clr { margin-left: 5px; }
.msgbody { flex: 1; background: #fff; margin: 0 1px; }
.msgtabs { height: 17px; display: flex; font: 500 8px/12px "Noto Sans", sans-serif; color: #ddd; }
.msgtabs button { width: 52px; height: 16px; }
.msgtabs .on { width: 54px; background: #fff; color: #111; border-bottom: 1px solid #12648a; }

.status { height: 24px; display: flex; align-items: center; background: #4c4c4c; color: #dedede; padding: 0 2px 0 5px; }
.vtools { display: flex; align-items: center; height: 18px; background: #eee; margin-right: 5px; }
.vtools button { width: 19px; height: 18px; }
.vtools svg { width: 13px; height: 13px; }
.vtools .act { background: #bbb; }
.vtools .wide { width: 26px; }
.vtools .dn { margin-left: 2px; }
.vsep { width: 1px; height: 12px; background: #ccc; margin: 0 3px; }
.cell { border-right: 1px solid #ccc; padding-right: 3px; margin-right: 5px; font: 10px/14px Roboto, sans-serif; }
.cell b { font-weight: 400; margin-right: 6px; }
.cell b:last-child { margin-right: 0; }
.cell:last-child { margin-right: 0; }
```
